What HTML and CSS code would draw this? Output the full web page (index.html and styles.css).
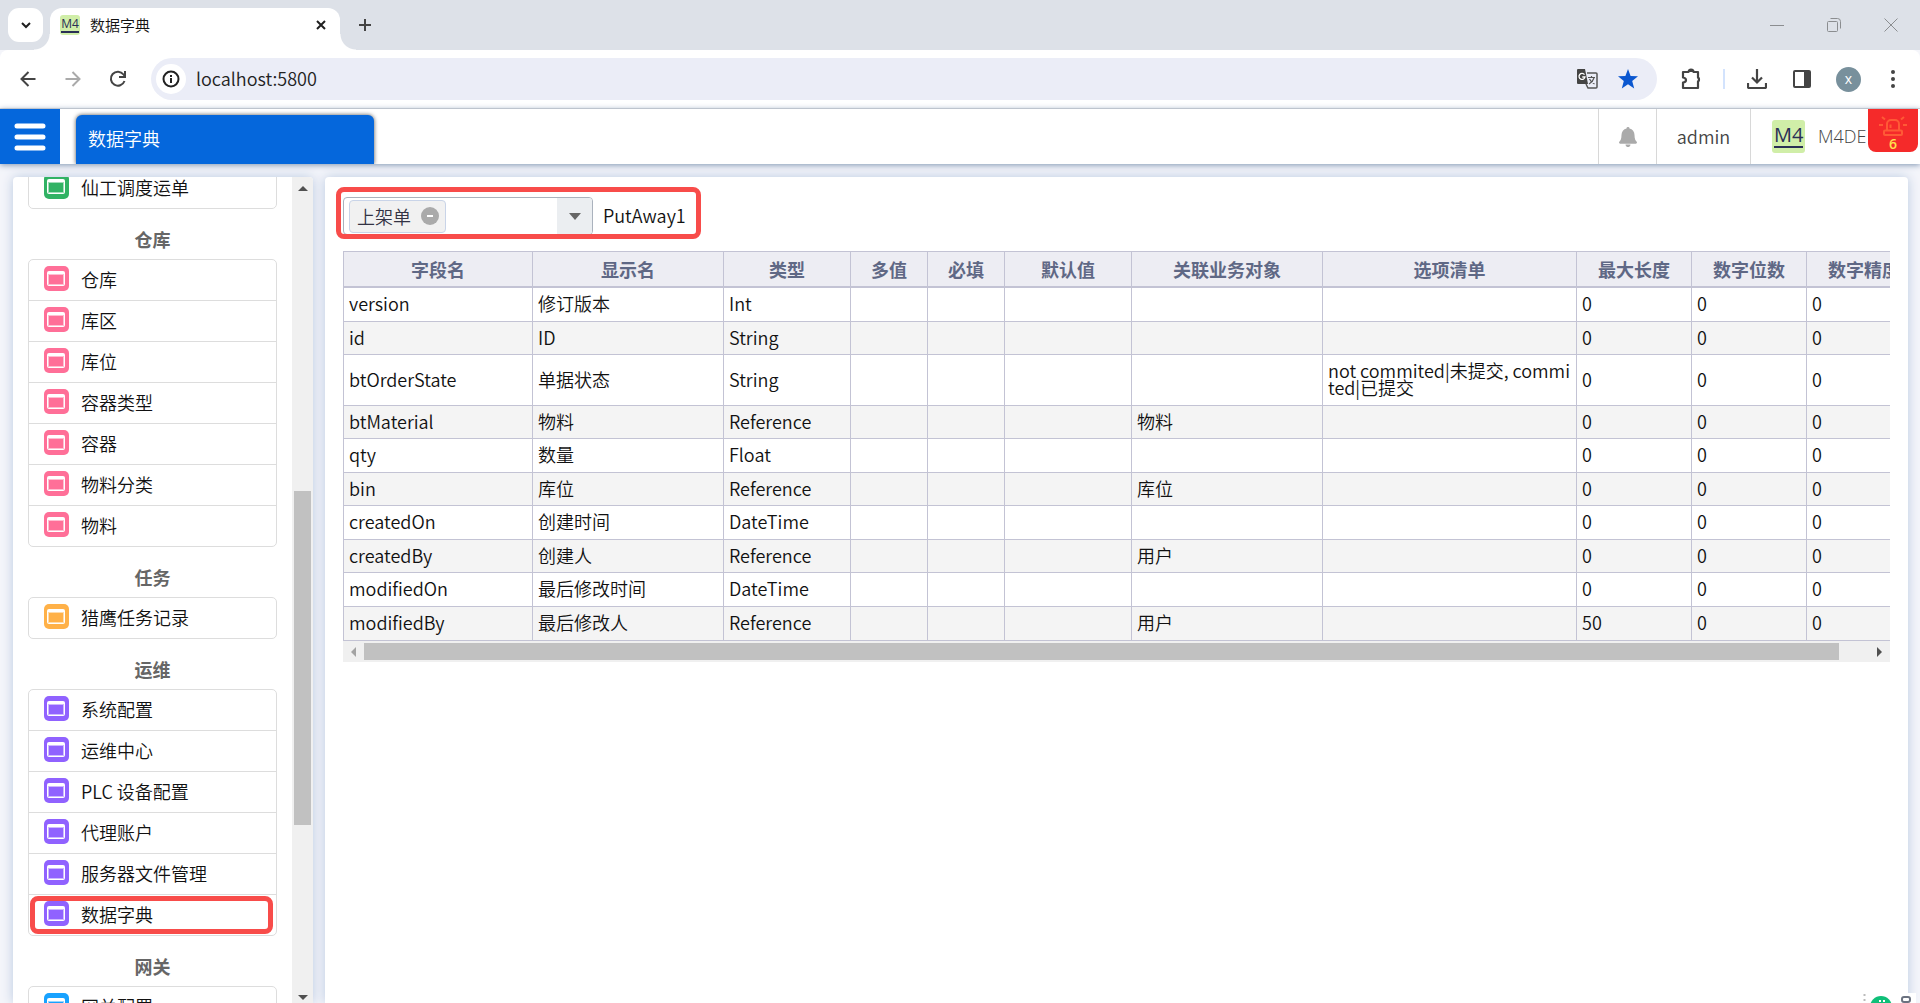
FILE: index.html
```html
<!DOCTYPE html>
<html lang="zh-CN">
<head>
<meta charset="utf-8">
<title>数据字典</title>
<link rel="stylesheet" href="styles.css">
</head>
<body>
<svg class="defs" aria-hidden="true">
  <symbol id="app" viewBox="0 0 25 25">
    <rect width="25" height="25" rx="5" fill="currentColor"/>
    <rect x="3" y="5" width="18" height="15" rx="2" fill="#fff"/>
    <rect x="4" y="8" width="16" height="11" fill="currentColor" opacity=".45"/>
    <rect x="5" y="9" width="14" height="9" fill="currentColor"/>
  </symbol>
</svg>

<div class="tabstrip">
  <button class="tab-search" aria-label="搜索标签页"><svg width="12" height="12" viewBox="0 0 12 12"><path d="M2 4l4 4 4-4" fill="none" stroke="#1f1f1f" stroke-width="2"/></svg></button>
  <div class="tab">
    <span class="m4 m4-small">M4</span>
    <span class="tab-title">数据字典</span>
    <button class="plain" aria-label="关闭标签页"><svg width="12" height="12" viewBox="0 0 12 12"><path d="M2 2l8 8M10 2l-8 8" stroke="#1f1f1f" stroke-width="2"/></svg></button>
  </div>
  <button class="plain new-tab" aria-label="新标签页"><svg width="14" height="14" viewBox="0 0 14 14"><path d="M7 1v12M1 7h12" stroke="#444" stroke-width="2"/></svg></button>
  <div class="window-buttons">
    <button class="plain" aria-label="最小化"><svg width="14" height="14" viewBox="0 0 14 14"><path d="M0 7.500h14" stroke="#8b8d90"/></svg></button>
    <button class="plain" aria-label="还原"><svg width="14" height="14" viewBox="0 0 14 14"><path d="M3.500.500h7a3 3 0 0 1 3 3v7M.500 4.500a1 1 0 0 1 1-1h8a1 1 0 0 1 1 1v8a1 1 0 0 1-1 1h-8a1 1 0 0 1-1-1z" fill="none" stroke="#8b8d90"/></svg></button>
    <button class="plain" aria-label="关闭"><svg width="14" height="14" viewBox="0 0 14 14"><path d="M.500.500l13 13M13.500.500l-13 13" stroke="#8b8d90"/></svg></button>
  </div>
</div>

<div class="toolbar">
  <button class="plain nav" aria-label="后退"><svg width="16" height="16" viewBox="0 0 16 16"><path d="M15.500 8H2M8.500 1L1.500 8l7 7" fill="none" stroke="#444" stroke-width="2"/></svg></button>
  <button class="plain nav" aria-label="前进"><svg width="16" height="16" viewBox="0 0 16 16"><path d="M.500 8H14M7.500 1l7 7-7 7" fill="none" stroke="#aaa" stroke-width="2"/></svg></button>
  <button class="plain nav" aria-label="刷新"><svg width="18" height="18" viewBox="0 0 18 18"><path d="M15.500 11A7 7 0 1 1 14.500 4.500L16 6.500" fill="none" stroke="#444" stroke-width="2"/><path d="M17 1v7h-7V6h5V1z" fill="#444"/></svg></button>
  <div class="address">
    <span class="site-info"><svg width="18" height="18" viewBox="0 0 18 18"><circle cx="9" cy="9" r="7.500" fill="none" stroke="#222" stroke-width="2"/><path d="M9 8v5M9 5v2" stroke="#222" stroke-width="2"/></svg></span>
    <input class="url" type="text" value="localhost:5800" aria-label="地址">
    <button class="plain" aria-label="翻译"><svg width="22" height="22" viewBox="0 0 22 22"><path d="M2 1h7l3 15H2a1 1 0 0 1-1-1V2a1 1 0 0 1 1-1z" fill="#444"/><path d="M8.500 6.700a3 3 0 1 0 .5 2.300H6.300" fill="none" stroke="#fff" stroke-width="1.300"/><path d="M11 5h9a1 1 0 0 1 1 1v13a1 1 0 0 1-1 1h-8l-2-4" fill="none" stroke="#555" stroke-width="1.500"/><path d="M12 9.500h7M15.500 8v1.500M18 10c-1 3-3 5-5 6M13.500 11c1 2 3 4 5 5" fill="none" stroke="#555" stroke-width="1.200"/></svg></button>
    <button class="plain" aria-label="收藏"><svg width="20" height="20" viewBox="0 0 20 20"><path d="M10 0l2.600 6.900 7.400.400-5.800 4.600 2 7.600L10 15.300 3.800 19.500l2-7.600L0 7.300l7.400-.4z" fill="#0b57d0"/></svg></button>
  </div>
  <button class="plain ext" aria-label="扩展程序"><svg width="22" height="22" viewBox="0 0 22 22"><path d="M2 4h5.500a2.500 2.500 0 0 1 5 0H17v5.500a2.500 2.500 0 0 1 0 4V20H2v-5.500c4-.5 4-4.500 0-5z" fill="none" stroke="#444" stroke-width="2.200" stroke-linejoin="round"/><path d="M7 4a3 3 0 0 1 6 0zM17 8.500a3.200 3.200 0 0 1 0 6z" fill="#444"/></svg></button>
  <span class="divider"></span>
  <button class="plain" aria-label="下载"><svg width="20" height="20" viewBox="0 0 20 20"><path d="M10 0v13M5 8.500l5 5 5-5M1 14v4a1 1 0 0 0 1 1h16a1 1 0 0 0 1-1v-4" fill="none" stroke="#444" stroke-width="2.200"/></svg></button>
  <button class="plain" aria-label="侧边栏"><svg width="18" height="18" viewBox="0 0 18 18"><rect x="1" y="1" width="16" height="16" rx="1" fill="none" stroke="#444" stroke-width="2"/><path d="M11 1h6v16h-6z" fill="#444"/></svg></button>
  <button class="avatar">x</button>
  <button class="plain more" aria-label="更多"><svg width="4" height="18" viewBox="0 0 4 18"><circle cx="2" cy="2" r="2" fill="#444"/><circle cx="2" cy="9" r="2" fill="#444"/><circle cx="2" cy="16" r="2" fill="#444"/></svg></button>
</div>

<header class="header">
  <button class="menu" aria-label="菜单"><svg width="32" height="28" viewBox="0 0 32 28"><path d="M3 3h26M3 14h26M3 25h26" stroke="#fff" stroke-width="5" stroke-linecap="round"/></svg></button>
  <a class="page-tab" href="#">数据字典</a>
  <div class="header-right">
    <button class="cell bell" aria-label="通知"><svg width="18" height="20" viewBox="0 0 18 20"><path d="M9 0a1.500 1.500 0 0 1 1.500 1.600C13.500 2.300 15.500 5 15.500 8c0 4 1 5.500 2.200 6.800.6.800.1 1.900-.9 1.900H1.200c-1 0-1.500-1.100-.9-1.900C1.500 13.500 2.500 12 2.500 8c0-3 2-5.700 5-6.400A1.500 1.500 0 0 1 9 0zM6.500 17.600h5a2.500 2.500 0 0 1-5 0z" fill="#aaa"/></svg></button>
    <button class="cell user">admin</button>
    <div class="cell brand"><span class="m4">M4</span><span class="brand-name">M4DE</span></div>
  </div>
  <button class="alarm"><svg width="28" height="20" viewBox="0 0 28 20"><path d="M8 14V8a4 4 0 0 1 4-4h4a4 4 0 0 1 4 4v6M11.500 12V8.500M6 14.500h16a1 1 0 0 1 1 1V18a1 1 0 0 1-1 1H6a1 1 0 0 1-1-1v-2.500a1 1 0 0 1 1-1zM6 3.500L3 1M22 3.500L25 1M4 9H0M24 9h4" fill="none" stroke="#ff5a36" stroke-width="2"/></svg><span>6</span></button>
</header>

<div class="workspace">
  <nav class="sidebar">
    <div class="sidebar-list">
      <ul class="group green">
        <li><a href="#"><svg><use href="#app"/></svg>仙工调度运单</a></li>
      </ul>
      <h2>仓库</h2>
      <ul class="group pink">
        <li><a href="#"><svg><use href="#app"/></svg>仓库</a></li>
        <li><a href="#"><svg><use href="#app"/></svg>库区</a></li>
        <li><a href="#"><svg><use href="#app"/></svg>库位</a></li>
        <li><a href="#"><svg><use href="#app"/></svg>容器类型</a></li>
        <li><a href="#"><svg><use href="#app"/></svg>容器</a></li>
        <li><a href="#"><svg><use href="#app"/></svg>物料分类</a></li>
        <li><a href="#"><svg><use href="#app"/></svg>物料</a></li>
      </ul>
      <h2>任务</h2>
      <ul class="group orange">
        <li><a href="#"><svg><use href="#app"/></svg>猎鹰任务记录</a></li>
      </ul>
      <h2>运维</h2>
      <ul class="group purple">
        <li><a href="#"><svg><use href="#app"/></svg>系统配置</a></li>
        <li><a href="#"><svg><use href="#app"/></svg>运维中心</a></li>
        <li><a href="#"><svg><use href="#app"/></svg>PLC 设备配置</a></li>
        <li><a href="#"><svg><use href="#app"/></svg>代理账户</a></li>
        <li><a href="#"><svg><use href="#app"/></svg>服务器文件管理</a></li>
        <li class="marked"><a href="#"><svg><use href="#app"/></svg>数据字典</a></li>
      </ul>
      <h2>网关</h2>
      <ul class="group blue">
        <li><a href="#"><svg><use href="#app"/></svg>网关配置</a></li>
      </ul>
    </div>
    <div class="vbar"><i class="arrow up"></i><div class="vtrack"><div class="vthumb"></div></div><i class="arrow down"></i></div>
  </nav>

  <main class="content">
    <div class="picker">
      <div class="combo">
        <span class="chip">上架单<button class="chip-remove" aria-label="移除"></button></span>
        <input type="text" aria-label="业务对象">
        <button class="combo-arrow" aria-label="展开"><i class="arrow down"></i></button>
      </div>
      <span>PutAway1</span>
    </div>
    <div class="table-wrap">
      <table>
        <colgroup><col class="w-name"><col class="w-mid"><col class="w-type"><col class="w-flag"><col class="w-flag"><col class="w-type"><col class="w-mid"><col class="w-options"><col class="w-number"><col class="w-number"><col class="w-number"></colgroup>
        <thead><tr><th>字段名</th><th>显示名</th><th>类型</th><th>多值</th><th>必填</th><th>默认值</th><th>关联业务对象</th><th>选项清单</th><th>最大长度</th><th>数字位数</th><th>数字精度</th></tr></thead>
        <tbody>
          <tr><td>version</td><td>修订版本</td><td>Int</td><td></td><td></td><td></td><td></td><td></td><td>0</td><td>0</td><td>0</td></tr>
          <tr><td>id</td><td>ID</td><td>String</td><td></td><td></td><td></td><td></td><td></td><td>0</td><td>0</td><td>0</td></tr>
          <tr class="tall"><td>btOrderState</td><td>单据状态</td><td>String</td><td></td><td></td><td></td><td></td><td>not commited|未提交, commited|已提交</td><td>0</td><td>0</td><td>0</td></tr>
          <tr><td>btMaterial</td><td>物料</td><td>Reference</td><td></td><td></td><td></td><td>物料</td><td></td><td>0</td><td>0</td><td>0</td></tr>
          <tr><td>qty</td><td>数量</td><td>Float</td><td></td><td></td><td></td><td></td><td></td><td>0</td><td>0</td><td>0</td></tr>
          <tr><td>bin</td><td>库位</td><td>Reference</td><td></td><td></td><td></td><td>库位</td><td></td><td>0</td><td>0</td><td>0</td></tr>
          <tr><td>createdOn</td><td>创建时间</td><td>DateTime</td><td></td><td></td><td></td><td></td><td></td><td>0</td><td>0</td><td>0</td></tr>
          <tr><td>createdBy</td><td>创建人</td><td>Reference</td><td></td><td></td><td></td><td>用户</td><td></td><td>0</td><td>0</td><td>0</td></tr>
          <tr><td>modifiedOn</td><td>最后修改时间</td><td>DateTime</td><td></td><td></td><td></td><td></td><td></td><td>0</td><td>0</td><td>0</td></tr>
          <tr><td>modifiedBy</td><td>最后修改人</td><td>Reference</td><td></td><td></td><td></td><td>用户</td><td></td><td>50</td><td>0</td><td>0</td></tr>
        </tbody>
      </table>
    </div>
    <div class="hbar"><i class="arrow left"></i><div class="htrack"><div class="hthumb"></div></div><i class="arrow right"></i></div>
  </main>
</div>

<div class="ime" aria-hidden="true"><svg width="56" height="10" viewBox="0 0 56 10"><path d="M4.500 1v2M4.500 6v2" stroke="#bbb" stroke-width="2"/><circle cx="21" cy="14" r="11" fill="#0fbf78"/><path d="M20 7v2M24 7v2" stroke="#fff" stroke-width="2"/><rect x="42" y="4" width="8" height="5" rx="2" fill="none" stroke="#6b7280" stroke-width="2"/></svg></div>
</body>
</html>
```
FILE: styles.css
```css
* { box-sizing: border-box; }

body {
  margin: 0;
  height: 100vh;
  overflow: hidden;
  display: flex;
  flex-direction: column;
  background: #f4f5fa;
  color: #111;
  font: 350 18px/24px "Noto Sans CJK SC", sans-serif;
}

button, input { font: inherit; color: inherit; border: 0; padding: 0; background: none; }
a { color: inherit; text-decoration: none; }
svg { display: block; }
.defs { display: none; }
.plain { display: flex; align-items: center; justify-content: center; }

/* browser tabs */
.tabstrip {
  flex: none;
  height: 50px;
  display: flex;
  padding: 8px 22px 0 8px;
  background: #dde1e8;
}
.tab-search {
  width: 35px;
  height: 34px;
  border-radius: 11px;
  background: #fff;
  display: flex;
  align-items: center;
  justify-content: center;
}
.tab {
  position: relative;
  width: 290px;
  margin-left: 7px;
  padding: 0 13px 8px 10px;
  border-radius: 12px 12px 0 0;
  background: #fff;
  display: flex;
  align-items: center;
  gap: 10px;
}
.tab::before, .tab::after {
  content: "";
  position: absolute;
  bottom: 0;
  width: 16px;
  height: 16px;
}
.tab::before { right: 100%; background: radial-gradient(circle at 0 0, transparent 15px, #fff 16px); }
.tab::after { left: 100%; background: radial-gradient(circle at 100% 0, transparent 15px, #fff 16px); }
.tab-title { flex: 1; font-size: 15px; }
.new-tab { width: 50px; height: 34px; }
.window-buttons { margin-left: auto; display: flex; gap: 43px; height: 34px; }

.m4 {
  width: 33px;
  height: 33px;
  border-radius: 3px;
  padding: 3px 2px 2px;
  background: #d0eea8;
  color: #2a2f55;
  font: 400 20px/23px "Open Sans", sans-serif;
  text-align: center;
}
.m4::after { content: ""; display: block; height: 2px; background: #2a2f55; }
.m4-small { width: 20px; height: 20px; padding: 1px; font-size: 12px; line-height: 15px; }

/* browser toolbar */
.toolbar {
  flex: none;
  height: 59px;
  display: flex;
  align-items: center;
  gap: 26px;
  padding: 0 25px 0 18px;
  background: #fff;
  border-bottom: 1px solid #dcdcdc;
  border-radius: 8px 8px 0 0;
}
.nav { width: 20px; }
.nav + .nav { margin-left: -1px; }
.address {
  flex: 1;
  height: 42px;
  margin-left: -3px;
  padding: 0 19px 0 5px;
  border-radius: 21px;
  background: #ebedf7;
  display: flex;
  align-items: center;
  gap: 20px;
}
.site-info {
  width: 30px;
  height: 30px;
  border-radius: 50%;
  background: #fff;
  display: flex;
  align-items: center;
  justify-content: center;
}
.url { flex: 1; margin-left: -10px; padding-bottom: 2px; color: #222; }
.ext { margin-left: -2px; }
.divider { width: 2px; height: 20px; margin: 0 -4px 0 -6px; background: #d3e3fd; }
.avatar {
  width: 25px;
  height: 25px;
  margin-left: -1px;
  border-radius: 50%;
  background: #78909c;
  color: #fff;
  font: 400 14px/20px "Open Sans", sans-serif;
}
.more { margin-left: 4px; }

/* application header */
.header {
  position: relative;
  z-index: 1;
  flex: none;
  height: 55px;
  display: flex;
  background: #fff;
  box-shadow: 0 1px 6px #7d93b0;
}
.menu {
  width: 60px;
  background: #0567dc;
  display: flex;
  align-items: center;
  justify-content: center;
}
.page-tab {
  width: 298px;
  margin: 6px 0 0 16px;
  padding: 11px 12px;
  border-radius: 6px 6px 0 0;
  background: #0567dc;
  box-shadow: 0 0 4px #555;
  color: #fff;
  clip-path: inset(-6px -6px 0 -6px);
}
.header-right { margin-left: auto; display: flex; color: #444; }
.cell { border-left: 1px solid #d8d8d8; display: flex; align-items: center; justify-content: center; }
.bell { width: 58px; }
.user { width: 94px; padding-bottom: 2px; }
.brand { width: 170px; padding-left: 21px; gap: 13px; justify-content: flex-start; }
.brand-name { font-family: "Open Sans", sans-serif; padding-bottom: 2px; }
.alarm {
  position: absolute;
  top: 0;
  right: 2px;
  width: 50px;
  height: 43px;
  padding-top: 7px;
  border-radius: 0 0 8px 8px;
  background: #f52a2a;
  color: #ffe14d;
  font: 600 14px/15px "Open Sans", sans-serif;
  display: flex;
  flex-direction: column;
  align-items: center;
}

/* panels */
.workspace { flex: 1; min-height: 0; display: flex; gap: 12px; padding: 13px 12px 0 13px; }
.sidebar, .content {
  background: #fff;
  border-radius: 4px 4px 0 0;
  box-shadow: 0 0 12px #b9c9e0;
}
.sidebar { flex: none; width: 300px; display: flex; overflow: hidden; }
.sidebar-list { flex: 1; margin-top: -10px; padding: 0 15px; }
.group { list-style: none; margin: 0; padding: 0; border: 1px solid #ddd; border-radius: 5px; }
.group li { height: 41px; border-bottom: 1px solid #ddd; }
.group li:last-child { height: 40px; border-bottom: 0; }
.group a { height: 40px; padding: 0 0 3px 15px; display: flex; align-items: center; gap: 12px; }
.group svg { width: 25px; height: 25px; }
.sidebar h2 { margin: 0; height: 50px; padding-top: 18px; font-size: 18px; line-height: 24px; font-weight: 700; text-align: center; color: #666; }
.green svg { color: #31b264; }
.pink svg { color: #ff6f98; }
.orange svg { color: #ffb148; }
.purple svg { color: #9062ff; }
.blue svg { color: #18a2ff; }
.marked { position: relative; }
.marked::after {
  content: "";
  position: absolute;
  inset: 1px 3px 1px 1px;
  border: 5px solid #f84c4a;
  border-radius: 8px;
}

/* scroll bars */
.arrow { width: 0; height: 0; border: 5px solid transparent; }
.arrow.up { border-top: 0; border-bottom-color: #505050; }
.arrow.down { border-bottom: 0; border-top-color: #505050; }
.arrow.left { border-left: 0; border-right-color: #a3a3a3; }
.arrow.right { border-right: 0; border-left-color: #505050; }
.vbar { width: 21px; padding: 9px 2px 3px; background: #f0f0f0; display: flex; flex-direction: column; align-items: center; gap: 7px; }
.vtrack { flex: 1; align-self: stretch; padding-top: 293px; }
.vthumb { height: 43%; min-height: 334px; background: #c1c1c1; }
.hbar { height: 21px; padding: 2px 8px; background: #f0f0f0; display: flex; align-items: center; gap: 8px; }
.htrack { flex: 1; align-self: stretch; }
.hthumb { width: 98%; height: 17px; background: #c1c1c1; }

/* field table */
.content { flex: 1; min-width: 0; padding: 20px 18px 0; }
.picker { position: relative; width: 358px; height: 54px; display: flex; gap: 10px; align-items: flex-start; line-height: 36px; }
.picker::after {
  content: "";
  position: absolute;
  inset: -10px 0 12px -7px;
  border: 5px solid #f84c4a;
  border-radius: 8px;
  pointer-events: none;
}
.combo {
  width: 250px;
  height: 38px;
  border: 1px solid #aab2bd;
  border-radius: 4px;
  padding-left: 5px;
  display: flex;
  align-items: center;
}
.chip {
  flex: none;
  height: 33px;
  padding: 0 6px 0 7px;
  border: 1px solid #c9d4e8;
  border-radius: 4px;
  background: #f1f1f1;
  color: #334;
  display: flex;
  align-items: center;
  gap: 10px;
  line-height: 30px;
}
.chip-remove { width: 18px; height: 18px; border-radius: 50%; background: linear-gradient(#fff, #fff) center / 6px 2px no-repeat #aaa; }
.combo input { flex: 1; width: 0; }
.combo-arrow { width: 35px; height: 36px; border-radius: 0 3px 3px 0; background: #ebeef1; display: flex; align-items: center; justify-content: center; }
.combo-arrow .arrow { border-width: 7px 6px 0; border-top-color: #666; }

.table-wrap { overflow: hidden; }
table { width: 1578px; table-layout: fixed; border-collapse: separate; border-spacing: 0; border-left: 1px solid #c3c3d4; line-height: 17px; }
.w-name { width: 189px; }
.w-mid { width: 191px; }
.w-type { width: 127px; }
.w-flag { width: 77px; }
.w-options { width: 254px; }
.w-number { width: 115px; }
th { height: 37px; padding: 0; border: 1px solid #c3c3d4; border-left: 0; border-bottom-width: 2px; background: #ededf3; color: #5f6885; font-weight: 700; }
td { height: 33px; padding: 0 5px 2px; border: 1px solid #c3c3d4; border-width: 0 1px 1px 0; word-break: break-all; }
tr:nth-child(odd) td, tr:last-child td { height: 34px; }
tr:nth-child(even) td { background: #f4f4f4; }
tr.tall td { height: 51px; }

/* input-method bar */
.ime { position: absolute; right: 4px; bottom: 0; background: #fff; z-index: 2; }
```
